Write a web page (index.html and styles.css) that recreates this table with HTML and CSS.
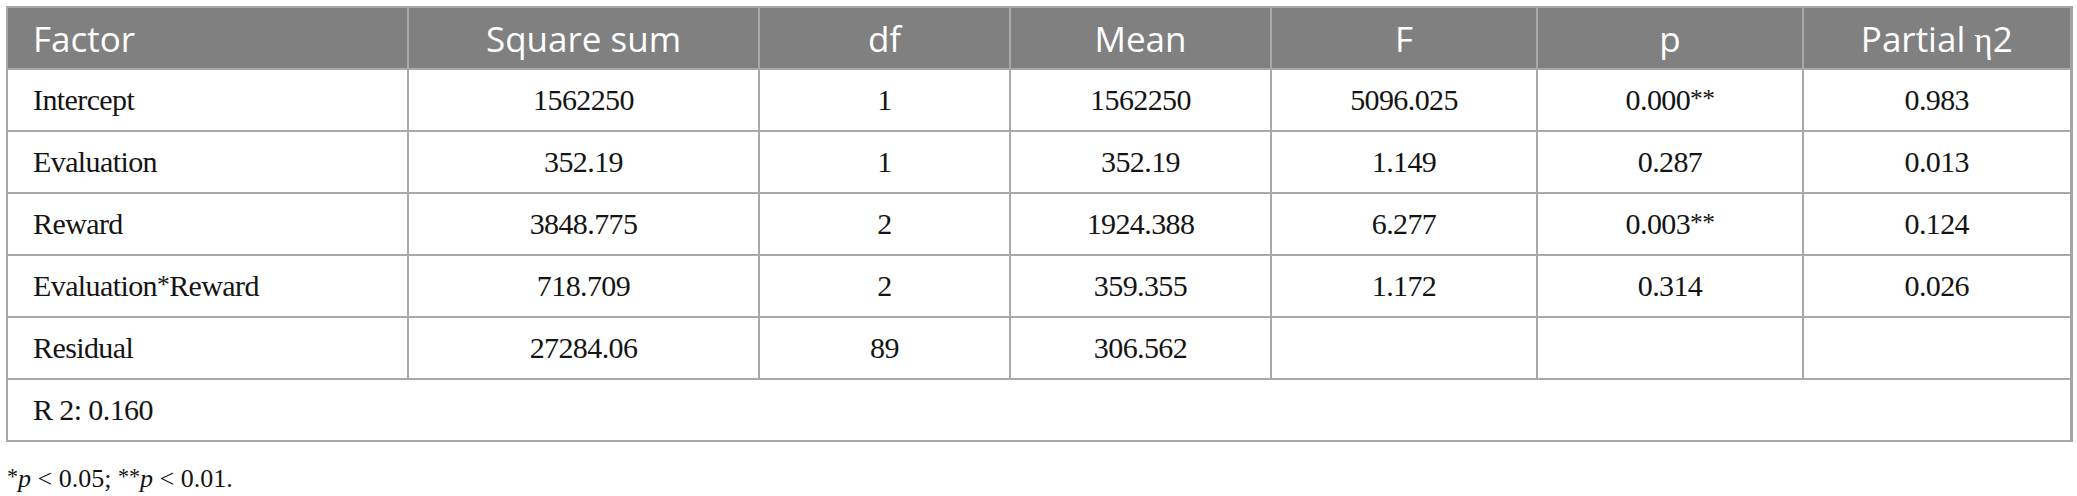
FILE: index.html
```html
<!DOCTYPE html>
<html>
<head>
<meta charset="utf-8">
<link rel="stylesheet" href="styles.css">
</head>
<body>
<div class="wrap">
  <table class="anova">
    <colgroup>
      <col class="c1"><col class="c2"><col class="c3"><col class="c4"><col class="c5"><col class="c6"><col class="c7">
    </colgroup>
    <thead>
      <tr>
        <th class="left">Factor</th>
        <th>Square sum</th>
        <th>df</th>
        <th>Mean</th>
        <th>F</th>
        <th>p</th>
        <th>Partial <span class="eta">η</span>2</th>
      </tr>
    </thead>
    <tbody>
      <tr><td class="left">Intercept</td><td>1562250</td><td>1</td><td>1562250</td><td>5096.025</td><td>0.000<span class="ast">**</span></td><td>0.983</td></tr>
      <tr><td class="left">Evaluation</td><td>352.19</td><td>1</td><td>352.19</td><td>1.149</td><td>0.287</td><td>0.013</td></tr>
      <tr><td class="left">Reward</td><td>3848.775</td><td>2</td><td>1924.388</td><td>6.277</td><td>0.003<span class="ast">**</span></td><td>0.124</td></tr>
      <tr><td class="left">Evaluation<span class="ast">*</span>Reward</td><td>718.709</td><td>2</td><td>359.355</td><td>1.172</td><td>0.314</td><td>0.026</td></tr>
      <tr><td class="left">Residual</td><td>27284.06</td><td>89</td><td>306.562</td><td></td><td></td><td></td></tr>
      <tr><td class="left" colspan="7">R 2: 0.160</td></tr>
    </tbody>
  </table>
  <p class="note"><span class="ast">*</span><i>p</i> &lt; 0.05; <span class="ast">**</span><i>p</i> &lt; 0.01.</p>
</div>
</body>
</html>
```
FILE: styles.css
```css
html, body {
  margin: 0;
  padding: 0;
  background: #ffffff;
}
.wrap {
  padding: 6px 0 0 6px;
}
.anova {
  border-collapse: collapse;
  table-layout: fixed;
  width: 2064px;
  font-family: "Liberation Serif", "Times New Roman", serif;
  font-size: 30px;
  letter-spacing: -0.6px;
  color: #141414;
  border-right: 3px solid #a4a4a4;
}
.c1 { width: 401px; }
.c2 { width: 351px; }
.c3 { width: 251px; }
.c4 { width: 261px; }
.c5 { width: 266px; }
.c6 { width: 266px; }
.c7 { width: 268px; }
.anova th,
.anova td {
  border: 2px solid #a9a9a9;
  text-align: center;
  vertical-align: middle;
  padding: 0 10px;
  height: 62px;
  box-sizing: border-box;
}
.anova th {
  background: #808080;
  color: #ffffff;
  font-family: "Open Sans", "Noto Sans", sans-serif;
  font-weight: 400;
  font-size: 35px;
  letter-spacing: 0;
}
.anova .left {
  text-align: left;
  padding-left: 25px;
}
.eta {
  font-family: "Liberation Serif", "Times New Roman", serif;
}
.note {
  margin: 22px 0 0 1px;
  font-family: "Liberation Serif", "Times New Roman", serif;
  font-size: 26px;
  color: #141414;
}
.ast {
  font-size: 0.85em;
  vertical-align: 0.12em;
}
```
